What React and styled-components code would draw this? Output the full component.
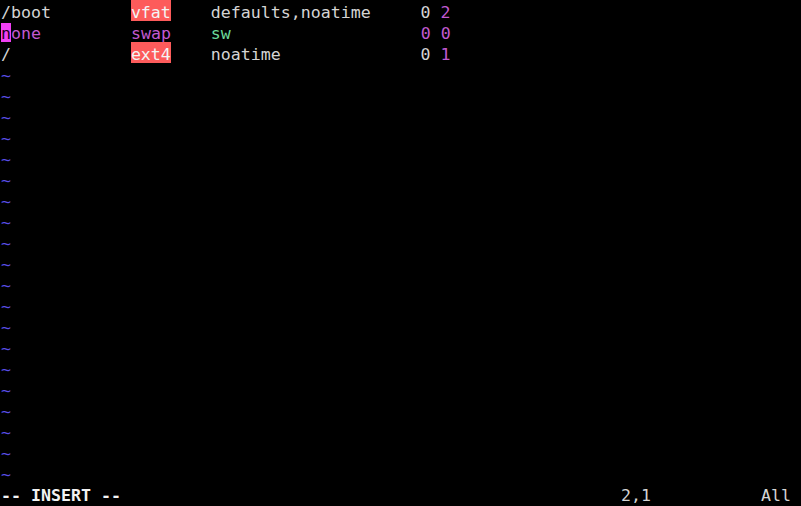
import styled, { createGlobalStyle } from 'styled-components'

const GlobalStyle = createGlobalStyle`
  html, body {
    margin: 0;
    padding: 0;
    background: #000;
  }
`

const Terminal = styled.div`
  width: 801px;
  height: 506px;
  box-sizing: border-box;
  padding: 0 0 0 1px;
  background: #000;
  color: #d4d4d4;
  font-family: "DejaVu Sans Mono", "Liberation Mono", monospace;
  font-size: 16.6px;
  line-height: 21px;
  display: flex;
  flex-direction: column;
  overflow: hidden;
`

const Buffer = styled.div`
  display: flex;
  flex-direction: column;
`

const Line = styled.div`
  box-sizing: border-box;
  height: 21px;
  padding-top: 2px;
  white-space: pre;
`

const Tok = styled.span`
  color: ${(p) => p.$color || 'inherit'};
`

const Hl = styled.span`
  background: #fd5b5b;
  color: #f4f4f4;
  display: inline-block;
  box-sizing: border-box;
  height: 21px;
  margin-top: -2px;
  padding-top: 2px;
  vertical-align: top;
`

const Cursor = styled.span`
  background: #f040f4;
  color: #1a001a;
  display: inline-block;
  height: 19px;
  vertical-align: top;
`

const Tilde = styled(Line)`
  color: #5a4ee6;
`

const StatusLine = styled(Line)`
  display: flex;
`

const Mode = styled.span`
  font-weight: bold;
  color: #f2f2f2;
  flex: 1;
`

const Ruler = styled.span`
  width: 140px;
`

const Percent = styled.span`
  width: 40px;
`

const MAGENTA = '#c25ad0'
const GREEN = '#6bd89a'

const App = () => {
  const tildes = Array.from({ length: 20 })

  return (
    <Terminal>
      <GlobalStyle />
      <Buffer>
        <Line>
          {'/boot        '}<Hl>vfat</Hl>{'    defaults,noatime     0 '}<Tok $color={MAGENTA}>2</Tok>
        </Line>
        <Line>
          <Cursor>n</Cursor><Tok $color={MAGENTA}>one</Tok>{'         '}<Tok $color={MAGENTA}>swap</Tok>{'    '}<Tok $color={GREEN}>sw</Tok>{'                   '}<Tok $color={MAGENTA}>0 0</Tok>
        </Line>
        <Line>
          {'/            '}<Hl>ext4</Hl>{'    noatime              0 '}<Tok $color={MAGENTA}>1</Tok>
        </Line>
        {tildes.map((_, i) => (
          <Tilde key={i}>~</Tilde>
        ))}
      </Buffer>
      <StatusLine>
        <Mode>-- INSERT --</Mode>
        <Ruler>2,1</Ruler>
        <Percent>All</Percent>
      </StatusLine>
    </Terminal>
  )
}

export default App
